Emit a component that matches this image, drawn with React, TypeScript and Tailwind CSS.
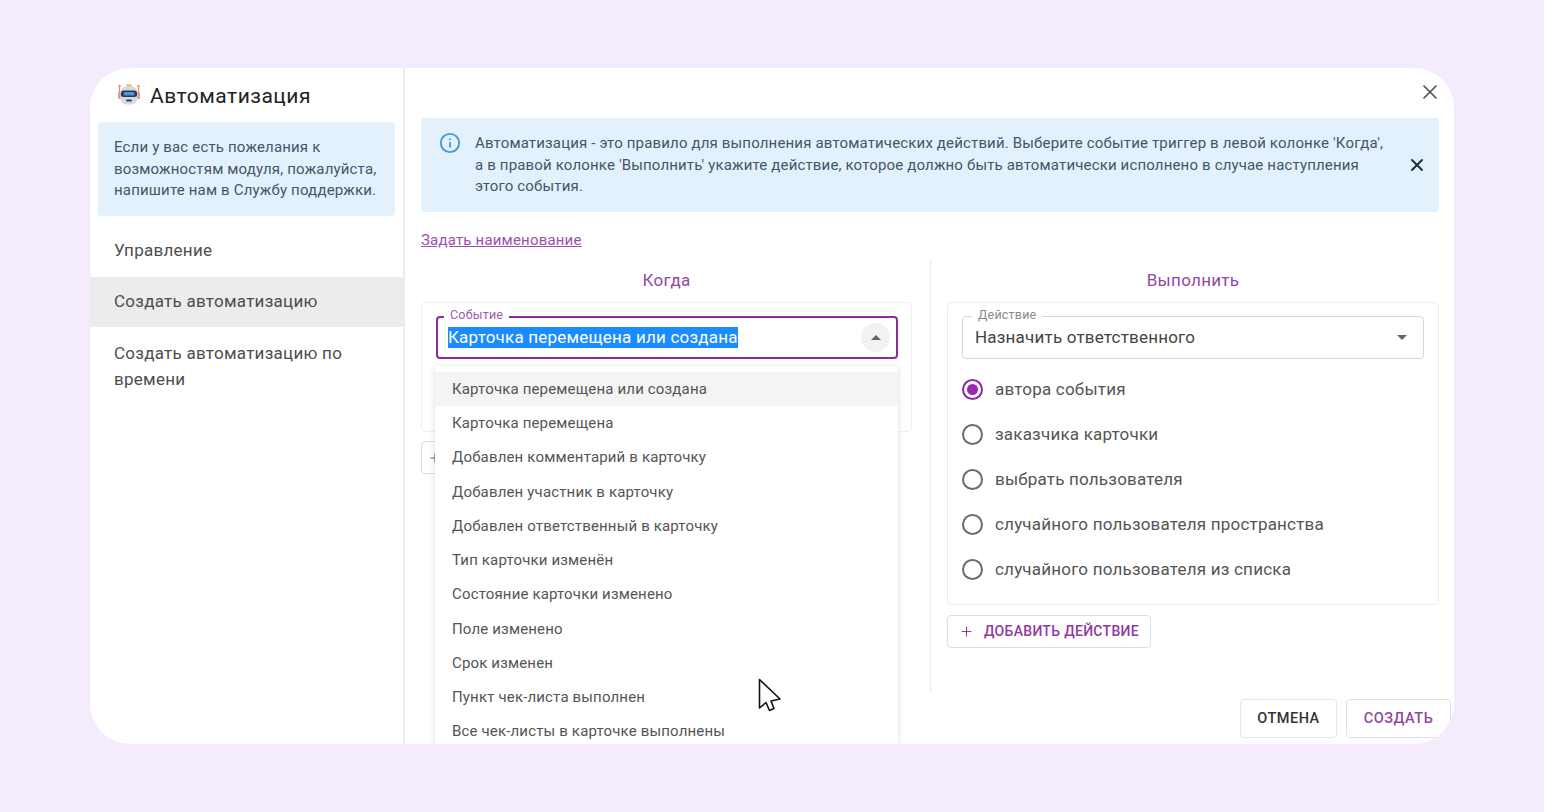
import { X, Plus } from "lucide-react";

const events = [
  "Карточка перемещена или создана",
  "Карточка перемещена",
  "Добавлен комментарий в карточку",
  "Добавлен участник в карточку",
  "Добавлен ответственный в карточку",
  "Тип карточки изменён",
  "Состояние карточки изменено",
  "Поле изменено",
  "Срок изменен",
  "Пункт чек-листа выполнен",
  "Все чек-листы в карточке выполнены",
];

const assignees = [
  "автора события",
  "заказчика карточки",
  "выбрать пользователя",
  "случайного пользователя пространства",
  "случайного пользователя из списка",
];

function RobotIcon() {
  return (
    <svg width="24" height="24" viewBox="0 0 24 24" className="shrink-0">
      <rect x="9" y="1" width="6" height="3" rx="1.5" fill="#f5c95c" />
      <path d="M2.5 3v8M21.5 3v8" stroke="#d98a7a" strokeWidth="1.2" />
      <circle cx="2.5" cy="3" r="1.2" fill="#e58b7c" />
      <circle cx="21.5" cy="3" r="1.2" fill="#e58b7c" />
      <rect x="1" y="9" width="3" height="7" rx="1" fill="#e49a88" />
      <rect x="20" y="9" width="3" height="7" rx="1" fill="#e49a88" />
      <rect x="3.5" y="3.5" width="17" height="18" rx="6" fill="#d5d9e2" />
      <rect x="4" y="7.5" width="16" height="6.5" rx="2.5" fill="#2f3a50" />
      <rect x="6.5" y="9" width="11" height="3.5" rx="1.5" fill="#4f93d8" />
      <rect x="9" y="16.5" width="6" height="2" rx="1" fill="#39435a" />
    </svg>
  );
}

function Caret({ up }: { up?: boolean }) {
  return (
    <svg width="10" height="5" viewBox="0 0 10 5">
      <path d={up ? "M0 5 L5 0 L10 5 Z" : "M0 0 L5 5 L10 0 Z"} fill="#666666" />
    </svg>
  );
}

function Radio({ checked }: { checked: boolean }) {
  return (
    <span
      className={`flex h-[21px] w-[21px] shrink-0 items-center justify-center rounded-full border-2 ${
        checked ? "border-[#8e24aa]" : "border-[#6b6b6b]"
      }`}
    >
      {checked && <span className="h-[11px] w-[11px] rounded-full bg-[#9c27b0]" />}
    </span>
  );
}

function Sidebar() {
  return (
    <aside className="flex w-[315px] shrink-0 flex-col border-r-2 border-[#ececec]">
      <div className="flex h-[54px] items-center gap-[9px] pl-[27px]">
        <RobotIcon />
        <span className="pt-[4px] text-[21px] tracking-[0.5px] text-[#222222]">Автоматизация</span>
      </div>
      <div className="mx-2 h-[94px] rounded bg-[#e3f1fd] py-[15px] pl-4 pr-2 text-[15px] leading-[21.5px] tracking-[0.17px] text-[#44566a]">
        Если у вас есть пожелания к возможностям модуля, пожалуйста, напишите нам в Службу
        поддержки.
      </div>
      <nav className="mt-[9px] text-[17px] tracking-[0.26px] text-[#4d4d4d]">
        <div className="flex h-[52px] items-center pl-6">Управление</div>
        <div className="flex h-[50px] items-center bg-[#ececec] pl-6">Создать автоматизацию</div>
        <div className="pb-3 pl-6 pr-10 pt-[13px] leading-[26px]">Создать автоматизацию по времени</div>
      </nav>
    </aside>
  );
}

function WhenColumn() {
  return (
    <section className="relative w-[491px] shrink-0">
      <h3 className="h-[42px] pt-[8px] text-center text-[17px] leading-[24px] tracking-[0.3px] text-[#8f4a9e]">
        Когда
      </h3>
      <div className="h-[130px] rounded border border-[#efefef] pl-[14px] pr-[13px] pt-[13px]">
        <div className="relative flex h-[43px] items-center justify-between rounded border-2 border-[#8e2a9e] pl-[10px] pr-[6px]">
          <span className="absolute -top-[10px] left-[6px] bg-white px-[6px] text-[12.5px] leading-[14px] tracking-[0.2px] text-[#a25ab0]">
            Событие
          </span>
          <span className="bg-[#1a8cff] text-[17px] leading-[21px] tracking-[0.2px] text-white">
            Карточка перемещена или создана
          </span>
          <span className="flex h-[29px] w-[29px] items-center justify-center rounded-full bg-[#f2f2f2]">
            <Caret up />
          </span>
        </div>
      </div>
      <div className="mt-[9px] flex h-[33px] w-[40px] items-center rounded border border-[#dddddd] pl-[6px] text-[#8f4a9e]">
        <Plus size={14} />
      </div>
      <ul className="absolute left-[14px] top-[106px] z-10 h-[378px] w-[463px] overflow-hidden bg-white pt-[6px] text-[15px] tracking-[0.16px] text-[#555555] shadow-[0_1px_6px_rgba(0,0,0,0.14)]">
        {events.map((event, i) => (
          <li
            key={event}
            className={`flex h-[34.25px] items-center pl-[17px] ${i === 0 ? "bg-[#f4f4f4]" : ""}`}
          >
            {event}
          </li>
        ))}
      </ul>
    </section>
  );
}

function ActionColumn() {
  return (
    <section className="w-[492px] shrink-0">
      <h3 className="h-[42px] pt-[8px] text-center text-[17px] leading-[24px] tracking-[0.3px] text-[#8f4a9e]">
        Выполнить
      </h3>
      <div className="h-[303px] rounded border border-[#ececec] px-[14px] pt-[13px]">
        <div className="relative flex h-[43px] items-center justify-between rounded border border-[#d6d6d6] pl-[12px] pr-[16px]">
          <span className="absolute -top-[9px] left-[9px] bg-white px-[6px] text-[12.5px] leading-[14px] tracking-[0.2px] text-[#8a8a8a]">
            Действие
          </span>
          <span className="text-[17px] tracking-[0.2px] text-[#444444]">
            Назначить ответственного
          </span>
          <Caret />
        </div>
        <div className="mt-[8px] flex flex-col">
          {assignees.map((label, i) => (
            <label key={label} className="flex h-[45px] items-center gap-[12px]">
              <Radio checked={i === 0} />
              <span className="text-[17px] tracking-[0.2px] text-[#555555]">{label}</span>
            </label>
          ))}
        </div>
      </div>
      <button className="mt-[10px] flex h-[33px] w-[204px] items-center gap-[10px] rounded border border-[#dddddd] pl-[11px] text-[14px] font-medium tracking-[0.3px] text-[#8f3a9e]">
        <Plus size={15} strokeWidth={1.75} />
        ДОБАВИТЬ ДЕЙСТВИЕ
      </button>
    </section>
  );
}

export default function App() {
  return (
    <div
      className="flex h-[812px] w-full items-center justify-center bg-[#f4ebfd]"
      style={{ fontFamily: "Roboto, sans-serif" }}
    >
      <div className="flex h-[676px] w-[1364px] overflow-hidden rounded-[40px] bg-white">
        <Sidebar />
        <main className="relative flex min-w-0 flex-1 flex-col pl-[16px] pr-[15px]">
          <div className="flex h-[50px] shrink-0 items-center justify-end">
            <X size={24} strokeWidth={1.75} className="mr-[-3px] mt-[-2px] text-[#555555]" />
          </div>
          <div className="flex h-[94px] shrink-0 items-start rounded bg-[#e3f1fd] pl-[18px] pr-[12px] pt-[15px]">
            <svg width="22" height="22" viewBox="0 0 24 24" className="mt-[-1px] shrink-0" fill="none">
              <circle cx="12" cy="12" r="10" stroke="#3f9ce0" strokeWidth="2" />
              <path d="M12 11v6M12 7v2" stroke="#3f9ce0" strokeWidth="2" />
            </svg>
            <p className="ml-[14px] flex-1 text-[15px] leading-[21.5px] tracking-[0.16px] text-[#44566a]">
              Автоматизация - это правило для выполнения автоматических действий. Выберите событие
              триггер в левой колонке 'Когда', а в правой колонке 'Выполнить' укажите действие,
              которое должно быть автоматически исполнено в случае наступления этого события.
            </p>
            <X size={20} strokeWidth={2.25} className="ml-[13px] mt-[22px] shrink-0 text-[#1c2b3a]" />
          </div>
          <a className="mt-[18px] h-[20px] shrink-0 text-[15px] leading-[20px] tracking-[0.19px] text-[#9c4fae] underline">
            Задать наименование
          </a>
          <div className="mt-[10px] flex h-[432px] shrink-0">
            <WhenColumn />
            <div className="ml-[18px] mr-[16px] w-px shrink-0 bg-[#ececec]" />
            <ActionColumn />
          </div>
          <div className="mt-[7px] flex justify-end gap-[9px] text-[14.5px] font-medium tracking-[0.5px]">
            <button className="h-[39px] w-[97px] rounded border border-[#e6e6e6] text-[#333333]">
              ОТМЕНА
            </button>
            <button className="mr-[-12px] h-[39px] w-[105px] rounded border border-[#e0e0e0] text-[#8f4a9e]">
              СОЗДАТЬ
            </button>
          </div>
          <svg width="24" height="36" viewBox="0 0 24 36" className="absolute left-[353px] top-[610px] z-20">
            <path
              d="M1.5 1.5 L1.5 30 L8 24.5 L11.5 32.5 L16 30.5 L13 23 L22 21 Z"
              fill="#ffffff"
              stroke="#111111"
              strokeWidth="1.6"
              strokeLinejoin="round"
            />
          </svg>
        </main>
      </div>
    </div>
  );
}
